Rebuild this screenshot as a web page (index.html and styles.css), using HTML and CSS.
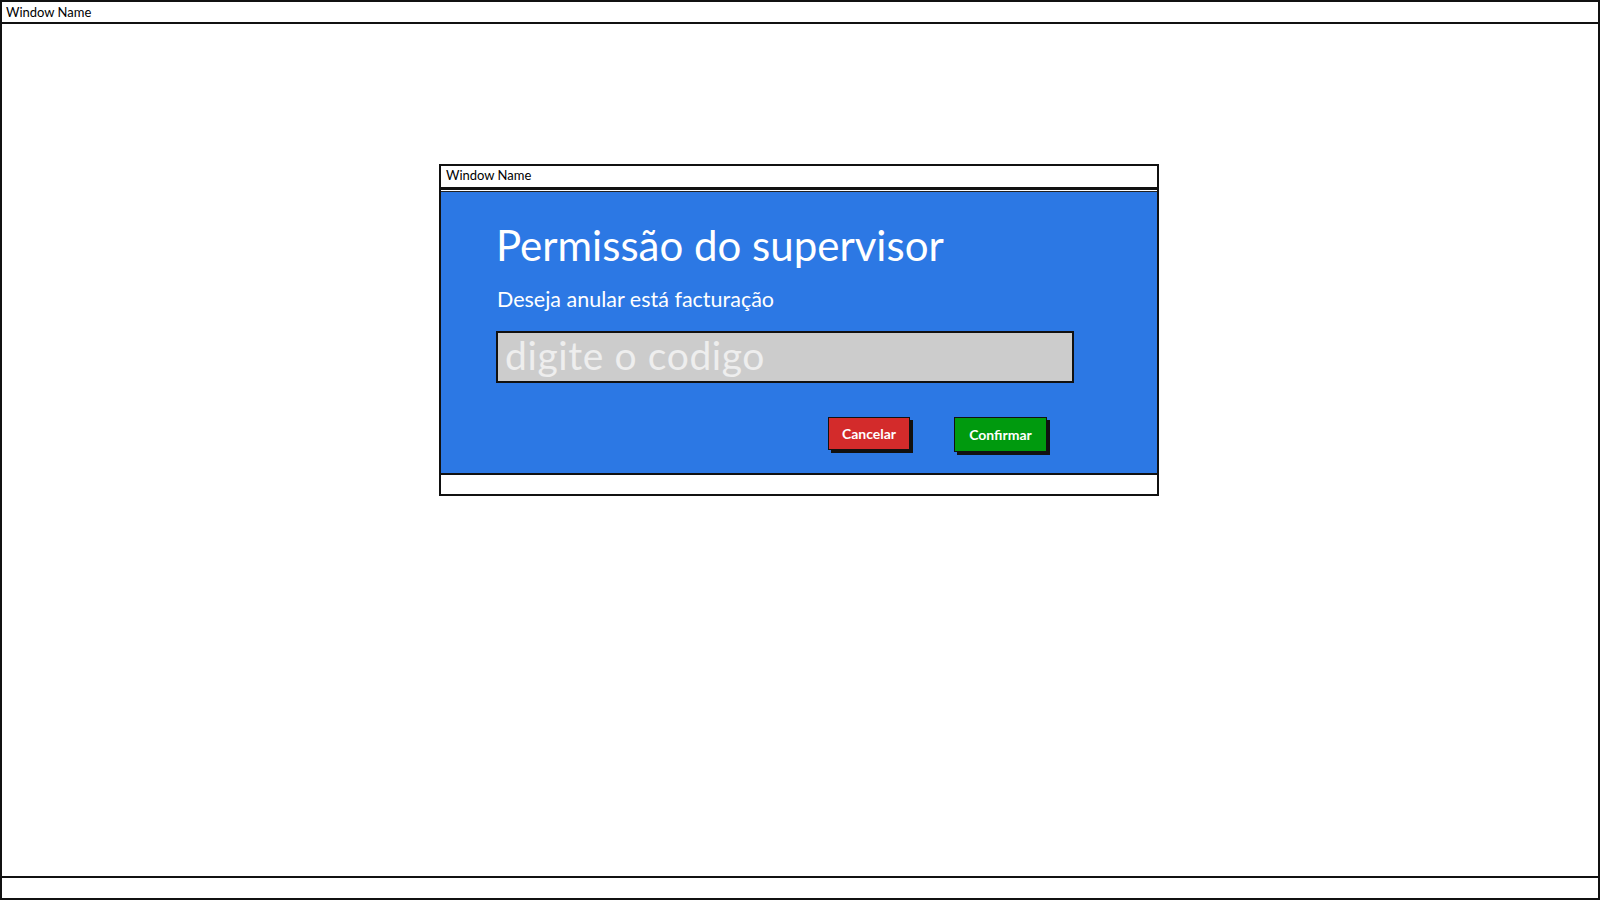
FILE: index.html
```html
<!DOCTYPE html>
<html lang="pt">
<head>
<meta charset="utf-8">
<title>Permissão do supervisor</title>
<link rel="stylesheet" href="styles.css">
</head>
<body>
<div class="window">
  <div class="titlebar">Window Name</div>
  <div class="desktop">
    <div class="dialog">
      <div class="dialog-titlebar">Window Name</div>
      <div class="dialog-body">
        <h1 class="dialog-title">Permissão do supervisor</h1>
        <p class="dialog-text">Deseja anular está facturação</p>
        <input class="code-input" type="text" placeholder="digite o codigo">
        <div class="actions">
          <button class="btn btn-cancel">Cancelar</button>
          <button class="btn btn-confirm">Confirmar</button>
        </div>
      </div>
      <div class="dialog-status"></div>
    </div>
  </div>
  <div class="statusbar"></div>
</div>
</body>
</html>
```

FILE: styles.css
```css
* { box-sizing: border-box; }
html, body { margin: 0; padding: 0; background: #fff; }
body { font-family: "Lato", "Open Sans", sans-serif; color: #000; }

.window {
  width: 1600px;
  height: 900px;
  border: 2px solid #111;
  display: flex;
  flex-direction: column;
}
.titlebar {
  height: 22px;
  border-bottom: 2px solid #111;
  font-size: 13px;
  line-height: 20px;
  padding-left: 4px;
}
.desktop {
  flex: 1;
  padding: 140px 0 0 437px;
}
.statusbar {
  height: 22px;
  border-top: 2px solid #111;
}

.dialog {
  width: 720px;
  border: 2px solid #111;
  background: #fff;
}
.dialog-titlebar {
  height: 24px;
  border-bottom: 3px solid #111;
  font-size: 13px;
  line-height: 19px;
  padding-left: 5px;
  margin-bottom: 1px;
}
.dialog-body {
  background: #2c78e4;
  border-top: 1px solid #222;
  border-bottom: 2px solid #111;
  height: 284px;
  padding: 28px 0 0 55px;
}
.dialog-title {
  margin: 0;
  font-size: 42px;
  line-height: 50px;
  font-weight: 400;
  color: #fff;
}
.dialog-text {
  margin: 16px 0 0 1px;
  font-size: 21.5px;
  line-height: 26px;
  color: #fff;
}
.code-input {
  display: block;
  margin-top: 19px;
  width: 578px;
  height: 52px;
  border: 2px solid #111;
  background: #cccccc;
  font-family: inherit;
  font-size: 39px;
  letter-spacing: 0.6px;
  padding: 0 6px 4px 7px;
  outline: none;
}
.code-input::placeholder { color: #eeeeee; opacity: 1; }
.actions {
  display: flex;
  justify-content: flex-end;
  gap: 44px;
  margin-top: 34px;
  padding-right: 110px;
}
.btn {
  font-family: inherit;
  font-size: 14px;
  font-weight: 700;
  color: #fff;
  border: 1.5px solid #111;
  box-shadow: 3px 3px 0 #111;
  padding: 0;
  cursor: pointer;
}
.btn-cancel { background: #d32b2b; width: 82px; height: 33px; }
.btn-confirm { background: #009a0e; width: 93px; height: 35px; }
.dialog-status { height: 19px; }
```
